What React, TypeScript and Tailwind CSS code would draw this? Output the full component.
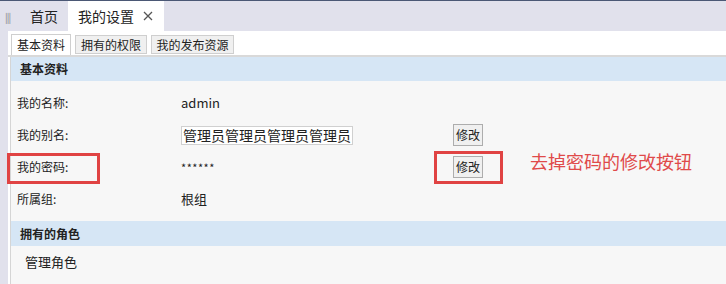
const font = { fontFamily: '"Noto Sans CJK SC", "Noto Sans", sans-serif' };

const rows = [
  { label: '我的名称:', value: 'admin', kind: 'text' },
  { label: '我的别名:', value: '管理员管理员管理员管理员', kind: 'input' },
  { label: '我的密码:', value: '******', kind: 'password' },
  { label: '所属组:', value: '根组', kind: 'text' },
];

const EditButton = () => (
  <button className="h-[22px] w-[30px] border border-[#adadad] bg-[#f0f0f0] text-[12px] leading-none text-[#222]">
    修改
  </button>
);

const App = () => {
  return (
    <div
      className="relative flex h-[284px] w-[726px] flex-col overflow-hidden bg-[#e1e1ec] text-[#222]"
      style={font}
    >
      {/* top page tabs */}
      <div className="flex h-[31px] shrink-0 items-stretch border-t border-[#4b5875]">
        <div className="flex w-[30px] items-center pl-[5px] text-[10px] tracking-[-1px] text-[#888]">|||</div>
        <div className="flex w-[38px] items-center text-[14px]">首页</div>
        <div className="flex w-[96px] items-center gap-[9px] bg-white pl-[10px] text-[14px]">
          <span>我的设置</span>
          <svg width="10" height="10" viewBox="0 0 10 10" className="text-[#555]">
            <path d="M1 1L9 9M9 1L1 9" stroke="currentColor" strokeWidth="1.3" />
          </svg>
        </div>
      </div>

      <div className="flex flex-1">
        <div className="w-[8px] shrink-0" />
        <div className="flex flex-1 flex-col bg-white">
          {/* inner tabs */}
          <div className="flex h-[26px] shrink-0 items-end gap-[4px] border-b-2 border-[#d9d9d9] pl-[3px]">
            <div className="flex h-[21px] w-[60px] items-center justify-center border border-b-0 border-[#cfcfcf] bg-white text-[12px]">
              基本资料
            </div>
            <div className="mb-[1px] flex h-[19px] w-[72px] items-center justify-center border border-[#cfcfcf] bg-[#f0f0f0] text-[12px]">
              拥有的权限
            </div>
            <div className="mb-[1px] flex h-[19px] w-[83px] items-center justify-center border border-[#cfcfcf] bg-[#f0f0f0] text-[12px]">
              我的发布资源
            </div>
          </div>

          <div className="ml-[2px] flex flex-1 flex-col border-l border-[#d5d5d5] bg-[#f7f7f7]">
            <div className="flex h-[24px] items-center bg-[#d6e6f5] pl-[9px] text-[12px] font-bold">基本资料</div>
            <div className="flex flex-col pt-[6px]">
              {rows.map((row) => (
                <div key={row.label} className="flex h-[32px] items-center text-[12px]">
                  <div className="w-[170px] pl-[6px]">{row.label}</div>
                  <div className="w-[272px]">
                    {row.kind === 'input' ? (
                      <div className="flex h-[19px] w-[172px] items-center border border-[#d0d0d0] bg-white pl-[1px] text-[14px]">
                        {row.value}
                      </div>
                    ) : row.kind === 'password' ? (
                      <span className="text-[11px] tracking-[0.5px]">{row.value}</span>
                    ) : (
                      <span className="text-[13px]">{row.value}</span>
                    )}
                  </div>
                  {row.kind !== 'text' && <EditButton />}
                </div>
              ))}
            </div>
            <div className="mt-[6px] flex h-[25px] items-center bg-[#d6e6f5] pl-[9px] text-[12px] font-bold">拥有的角色</div>
            <div className="flex h-[31px] items-center pl-[14px] text-[13px]">管理角色</div>
          </div>
        </div>
      </div>

      {/* annotations */}
      <div className="absolute left-[7px] top-[153px] h-[31px] w-[93px] border-[3px] border-[#e04343]" />
      <div className="absolute left-[434px] top-[151px] h-[33px] w-[69px] border-[3px] border-[#e04343]" />
      <div className="absolute left-[530px] top-[148px] text-[18px] text-[#e04a4a]">去掉密码的修改按钮</div>
    </div>
  );
};

export default App;
